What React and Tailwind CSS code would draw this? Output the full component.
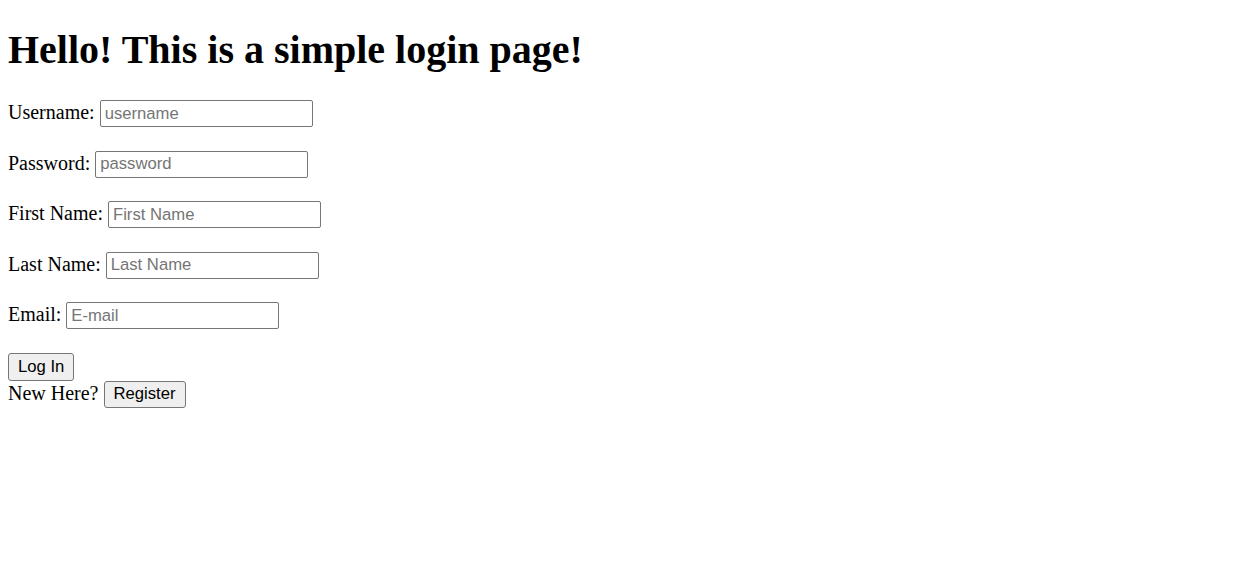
export default function App() {
  const serif = { fontFamily: '"Liberation Serif", "Times New Roman", serif' };
  const inputCls =
    "inline-block align-baseline w-[213px] h-[27px] border border-[#767676] rounded-[2px] px-[4px] text-[16.67px] text-black placeholder:text-[#757575] bg-white [font-family:'Liberation_Sans',Arial,sans-serif]";
  const btnCls =
    "inline-block align-baseline h-[27px] px-[9px] border border-[#767676] rounded-[3px] bg-[#efefef] text-[16.67px] text-black [font-family:'Liberation_Sans',Arial,sans-serif]";
  const rows = [
    ["Username:", "username"],
    ["Password:", "password"],
    ["First Name:", "First Name"],
    ["Last Name:", "Last Name"],
    ["Email:", "E-mail"],
  ];
  return (
    <div className="px-2 pb-4 text-[20px] text-black bg-white min-h-[575px]" style={serif}>
      <h1 className="text-[40px] font-bold leading-[normal] pt-[26px] mb-[27px]">
        Hello! This is a simple login page!
      </h1>
      {rows.map(([label, ph]) => (
        <p key={label} className="my-[23.5px] leading-[normal]">
          {label}{" "}
          <input className={inputCls} placeholder={ph} type={ph === "password" ? "password" : "text"} />
        </p>
      ))}
      <div className="leading-[normal]">
        <button className={`${btnCls} h-[28px]`}>Log In</button>
        <br />
        New Here? <button className={btnCls}>Register</button>
      </div>
    </div>
  );
}
